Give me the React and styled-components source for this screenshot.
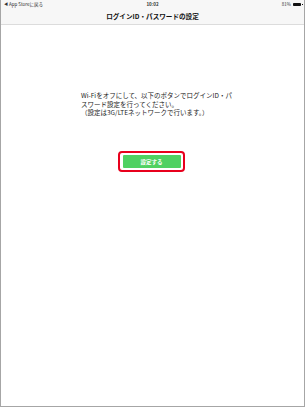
import React from 'react'
import styled, { createGlobalStyle } from 'styled-components'

const GlobalStyle = createGlobalStyle`
  html, body {
    margin: 0;
    padding: 0;
    background: #ffffff;
  }
  body {
    font-family: "Noto Sans CJK JP", "Noto Sans", sans-serif;
  }
`

const Frame = styled.div`
  box-sizing: border-box;
  width: 305px;
  height: 407px;
  border-left: 1px solid #a6a6a6;
  border-right: 1px solid #a6a6a6;
  border-bottom: 1px solid #a6a6a6;
  display: flex;
  flex-direction: column;
  background: #fff;
`

const Header = styled.div`
  background: #f7f7f7;
  border-bottom: 1px solid #dcdcdc;
  height: 25px;
  box-sizing: border-box;
  display: flex;
  flex-direction: column;
`

const StatusBar = styled.div`
  height: 9px;
  display: grid;
  grid-template-columns: 1fr auto 1fr;
  align-items: center;
  padding: 0 3px 0 3px;
  font-size: 4.5px;
  color: #333;
  line-height: 9px;
`

const Back = styled.span`
  display: flex;
  align-items: center;
  gap: 1px;
`

const Arrow = styled.span`
  font-size: 4px;
`

const Clock = styled.span`
  font-weight: 600;
`

const Battery = styled.span`
  justify-self: end;
  display: flex;
  align-items: center;
  gap: 2px;
`

const BatteryBody = styled.span`
  display: inline-block;
  width: 8px;
  height: 3.5px;
  border-radius: 0.8px;
  background: #111;
  position: relative;
  &::after {
    content: '';
    position: absolute;
    right: -1.5px;
    top: 1px;
    width: 1px;
    height: 1.5px;
    background: #111;
  }
`

const Title = styled.div`
  flex: 1;
  display: flex;
  align-items: center;
  justify-content: center;
  font-size: 6.6px;
  font-weight: 700;
  color: #111;
  padding-bottom: 2px;
`

const Body = styled.div`
  flex: 1;
  padding: 66px 0 0 80px;
`

const Message = styled.p`
  margin: 0;
  font-size: 6.5px;
  line-height: 8.6px;
  color: #222;
`

const ButtonRow = styled.div`
  display: flex;
  padding: 34px 0 0 37px;
`

const Highlight = styled.div`
  border: 2.5px solid #e8001c;
  border-radius: 4px;
  padding: 2px 2.5px;
  width: 58px;
`

const SetButton = styled.div`
  background: #4fd162;
  height: 13.5px;
  display: flex;
  align-items: center;
  justify-content: center;
  color: #fff;
  font-size: 5.5px;
  font-weight: 700;
  border-radius: 1px;
`

export default function App() {
  return (
    <>
      <GlobalStyle />
      <Frame>
        <Header>
          <StatusBar>
            <Back>
              <Arrow>◀</Arrow>
              App Storeに戻る
            </Back>
            <Clock>10:02</Clock>
            <Battery>
              81%
              <BatteryBody />
            </Battery>
          </StatusBar>
          <Title>ログインID・パスワードの設定</Title>
        </Header>
        <Body>
          <Message>
            Wi-Fiをオフにして、以下のボタンでログインID・パ<br />
            スワード設定を行ってください。<br />
            （設定は3G/LTEネットワークで行います。）
          </Message>
          <ButtonRow>
            <Highlight>
              <SetButton>設定する</SetButton>
            </Highlight>
          </ButtonRow>
        </Body>
      </Frame>
    </>
  )
}
